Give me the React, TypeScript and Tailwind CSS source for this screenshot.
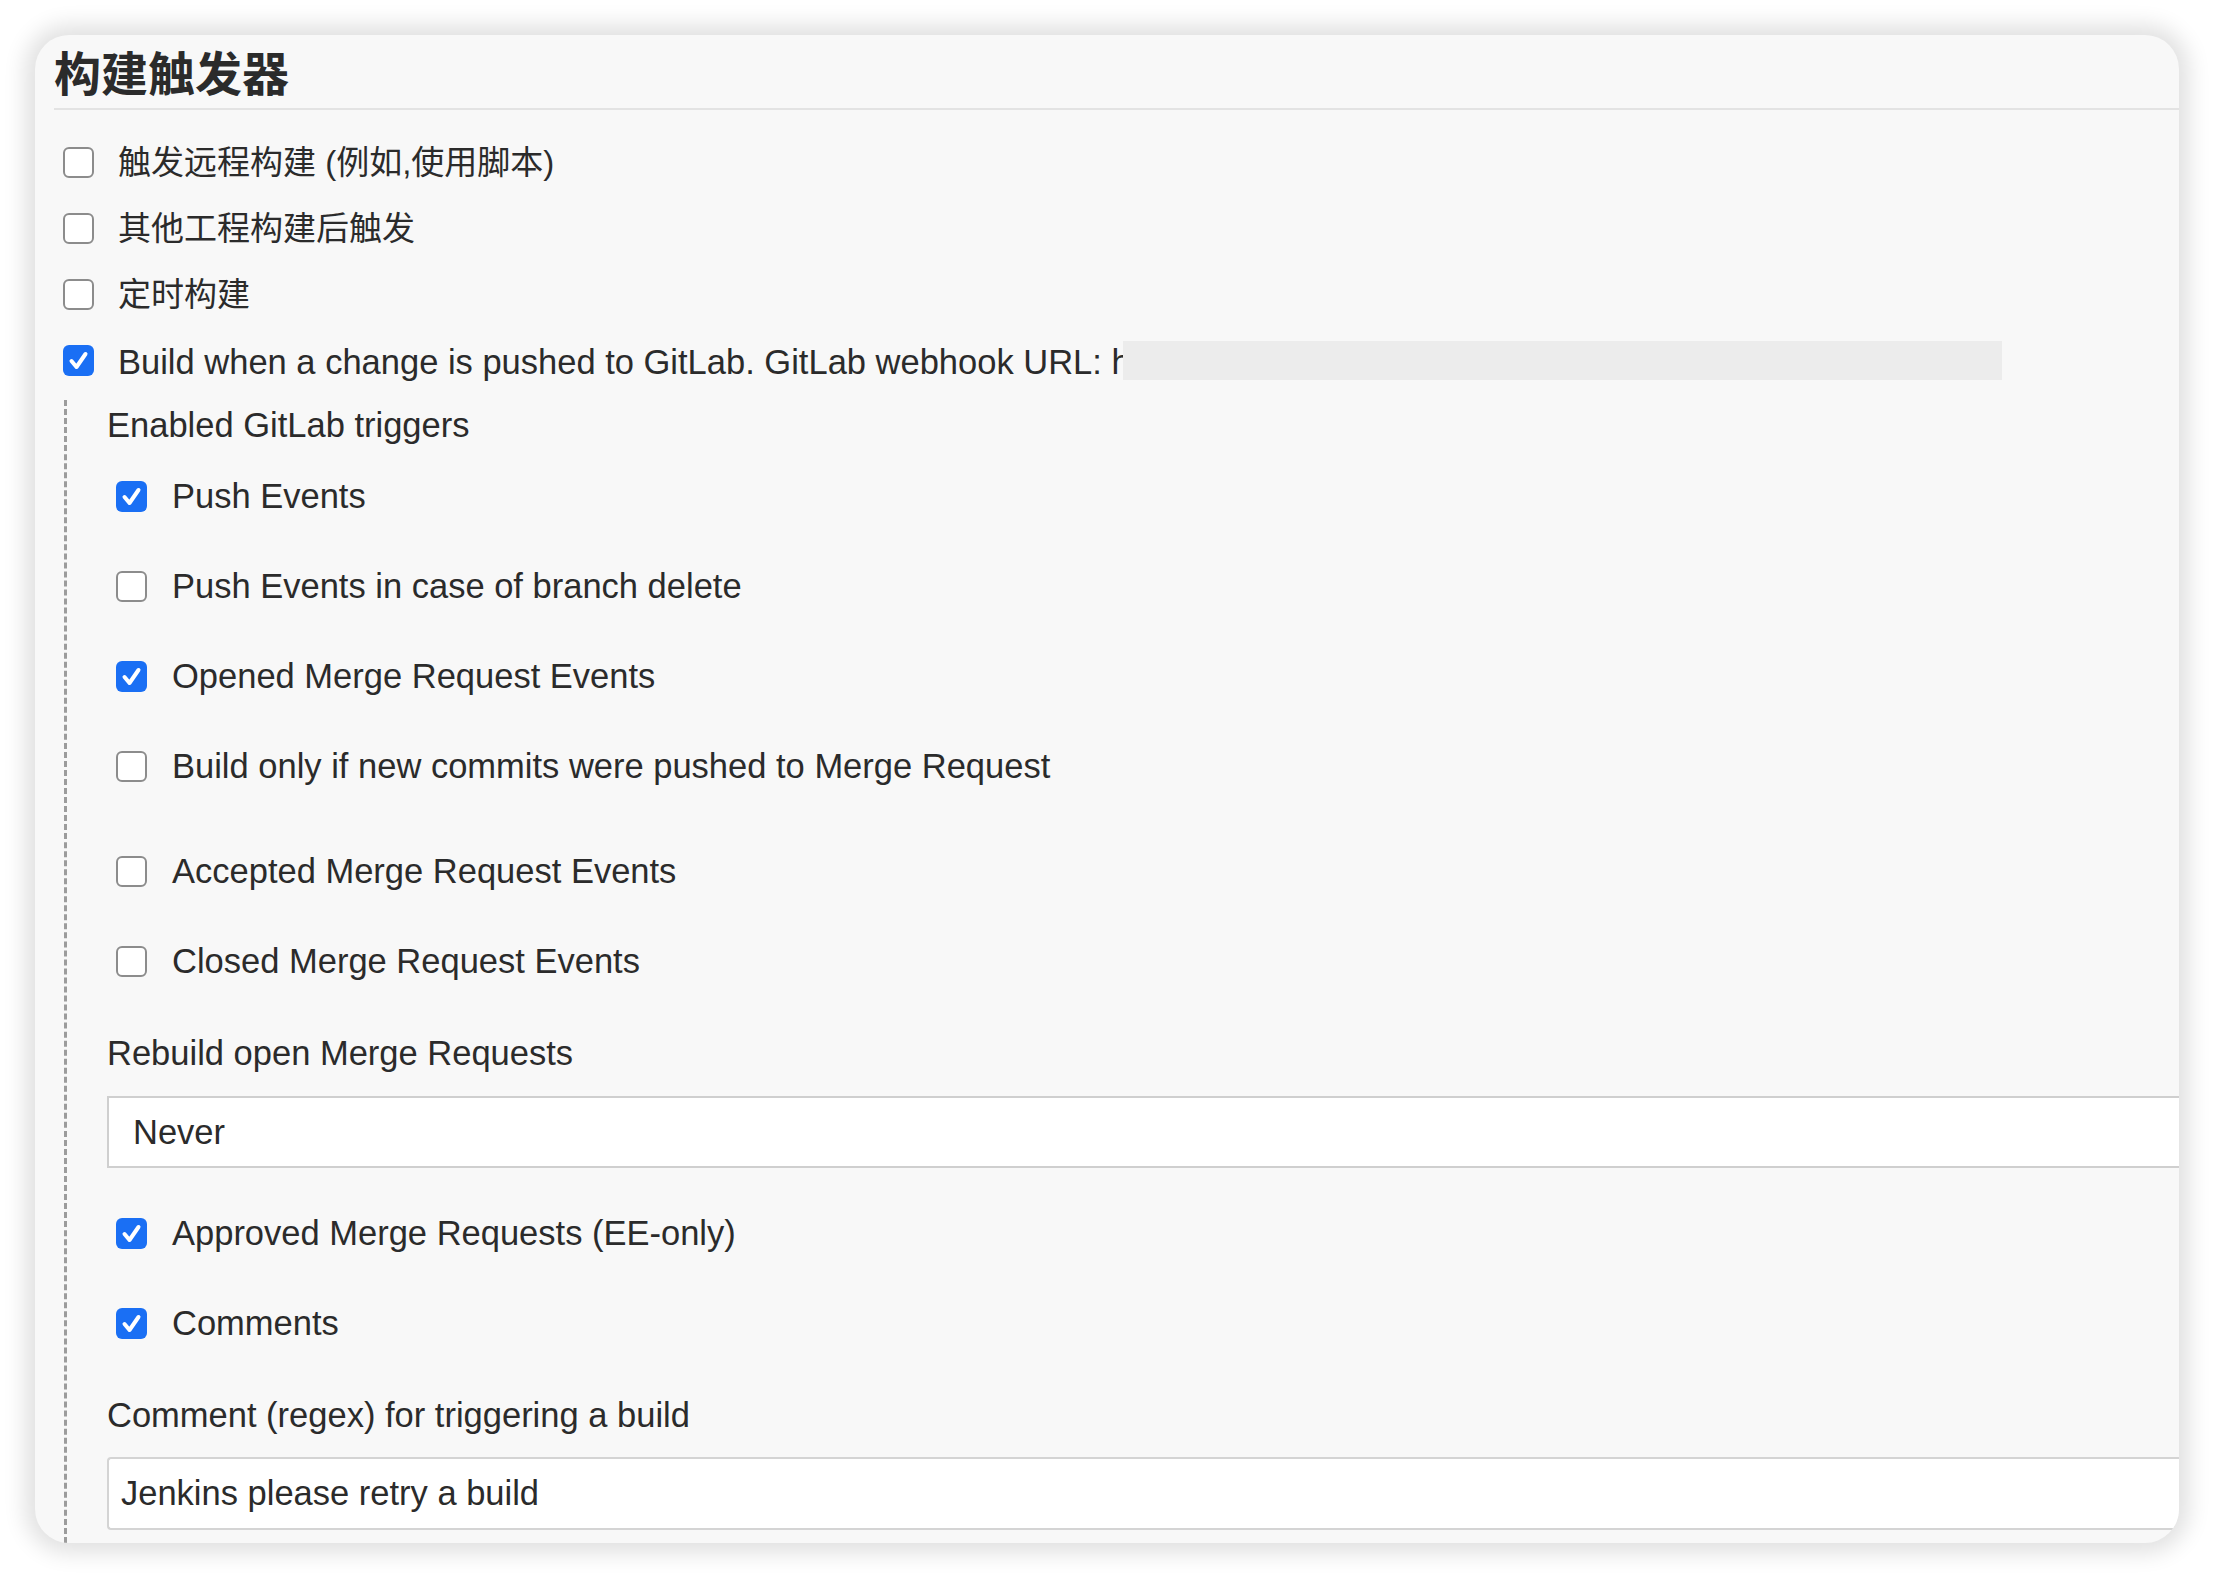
const font = "font-['Liberation_Sans','Noto_Sans_CJK_SC',sans-serif]";

const Check = ({ checked }: { checked?: boolean }) =>
  checked ? (
    <span className="flex size-[31px] shrink-0 items-center justify-center rounded-[6px] bg-[#1a6ff4]">
      <svg viewBox="0 0 31 31" className="size-[31px]">
        <polyline
          points="8.5,16 13.5,22 22.5,9"
          fill="none"
          stroke="white"
          strokeWidth="4"
          strokeLinecap="round"
          strokeLinejoin="round"
        />
      </svg>
    </span>
  ) : (
    <span className="size-[31px] shrink-0 rounded-[6px] border-2 border-[#8c8c8c] bg-white" />
  );

const TopRow = ({
  checked,
  children,
}: {
  checked?: boolean;
  children: React.ReactNode;
}) => (
  <div className="flex h-[66px] items-center gap-[24px] pl-[9px]">
    <Check checked={checked} />
    {children}
  </div>
);

const SubRow = ({
  checked,
  label,
  className = "",
}: {
  checked?: boolean;
  label: string;
  className?: string;
}) => (
  <div className={"flex h-[90px] items-center gap-[25px] pl-[9px] " + className}>
    <Check checked={checked} />
    <span className="text-[34.5px] leading-none">{label}</span>
  </div>
);

export default function App() {
  return (
    <div className={"min-h-screen bg-white pl-[35px] pt-[35px] text-[#2b2b2b] " + font}>
      <div className="h-[1508px] w-[2144px] overflow-hidden rounded-[34px] bg-[#f8f8f8] pl-[19px] shadow-[0_0_22px_10px_rgba(0,0,0,0.12)]">
        <div className="h-[75px] border-b-2 border-[#e3e3e3] pt-[12px] text-[47px] font-bold leading-[55px]">
          构建触发器
        </div>

        <div className="mt-[19px]">
          <TopRow>
            <span className="text-[33px] leading-none">触发远程构建 (例如,使用脚本)</span>
          </TopRow>
          <TopRow>
            <span className="text-[33px] leading-none">其他工程构建后触发</span>
          </TopRow>
          <TopRow>
            <span className="text-[33px] leading-none">定时构建</span>
          </TopRow>
          <TopRow checked>
            <span className="flex items-center whitespace-nowrap pt-[4px] text-[34.5px] leading-none">
              Build when a change is pushed to GitLab. GitLab webhook URL:&nbsp;h
              <span className="ml-[-8px] mt-[-4px] inline-block h-[39px] w-[879px] bg-[#ececec]" />
            </span>
          </TopRow>
        </div>

        <div className="ml-[10px] mt-[7px] border-l-[3px] border-dashed border-[#9c9c9c] pl-[40px]">
          <div className="flex h-[51px] items-center text-[34.5px] leading-none">
            Enabled GitLab triggers
          </div>
          <SubRow checked label="Push Events" />
          <SubRow label="Push Events in case of branch delete" />
          <SubRow checked label="Opened Merge Request Events" />
          <SubRow label="Build only if new commits were pushed to Merge Request" />
          <SubRow label="Accepted Merge Request Events" className="mt-[15px]" />
          <SubRow label="Closed Merge Request Events" />

          <div className="flex h-[90px] items-center pt-[4px] text-[34.5px] leading-none">
            Rebuild open Merge Requests
          </div>
          <div className="flex h-[72px] items-center border-2 border-r-0 border-[#cfcfcf] bg-white pl-[24px] text-[34.5px] leading-none">
            Never
          </div>

          <SubRow checked label="Approved Merge Requests (EE-only)" className="mt-[20px]" />
          <SubRow checked label="Comments" />

          <div className="flex h-[89px] items-center pt-[6px] text-[34.5px] leading-none">
            Comment (regex) for triggering a build
          </div>
          <div className="flex h-[73px] items-center rounded-l-[4px] border-2 border-r-0 border-[#d4d4d4] bg-white pl-[12px] text-[34.5px] leading-none">
            Jenkins please retry a build
          </div>
          <div className="h-[40px]" />
        </div>
      </div>
    </div>
  );
}
